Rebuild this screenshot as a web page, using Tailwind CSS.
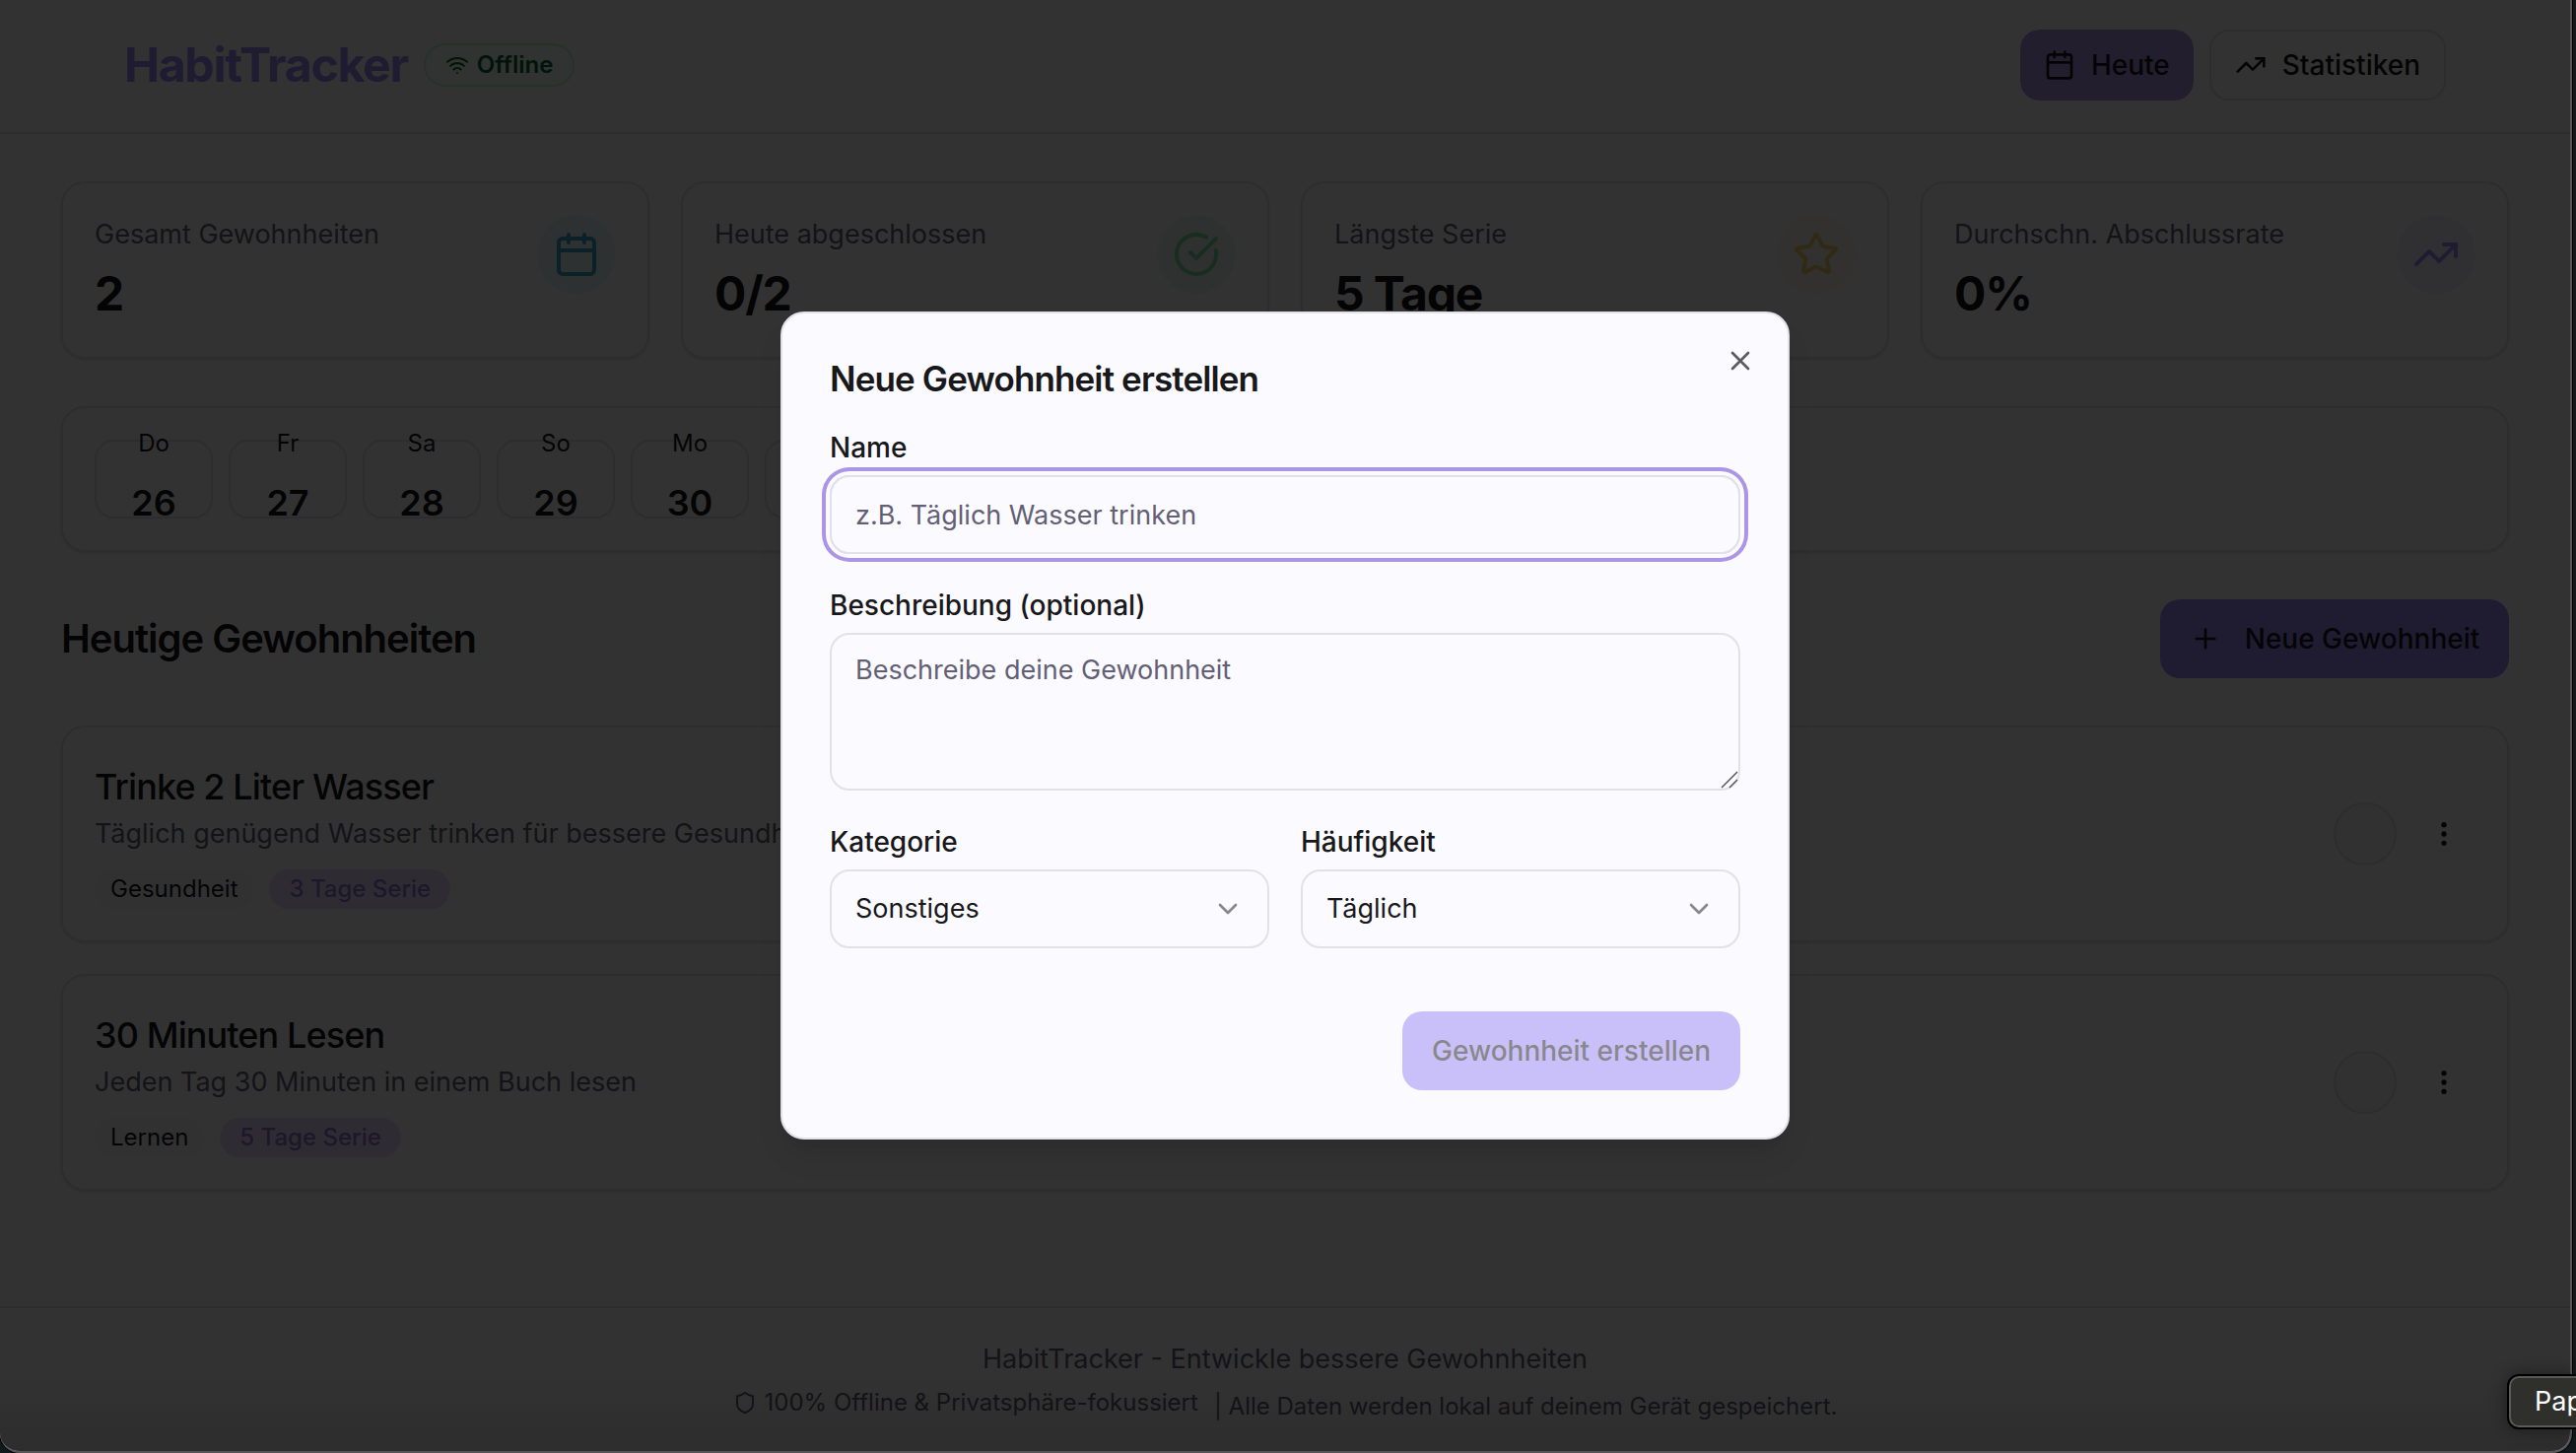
<!DOCTYPE html>
<html lang="de">
<head>
<meta charset="utf-8">
<meta name="viewport" content="width=device-width, initial-scale=1">
<title>HabitTracker</title>
<script src="https://cdn.jsdelivr.net/npm/@tailwindcss/browser@4"></script>
</head>
<body class="h-screen overflow-hidden bg-[#11191d] font-['Inter',sans-serif] text-[28px] leading-10 text-[#18181b]">
<svg class="hidden" aria-hidden="true">
  <symbol id="calendar" viewBox="0 0 24 24"><path d="M8 2v4M16 2v4M3 10h18"/><rect width="18" height="18" x="3" y="4" rx="2"/></symbol>
  <symbol id="trend" viewBox="0 0 24 24"><path d="m22 7-8.5 8.5-5-5L2 17"/><path d="M16 7h6v6"/></symbol>
  <symbol id="chevron" viewBox="0 0 24 24"><path d="m6 9 6 6 6-6"/></symbol>
  <symbol id="dots" viewBox="0 0 24 24"><circle cx="12" cy="12" r="1"/><circle cx="12" cy="5" r="1"/><circle cx="12" cy="19" r="1"/></symbol>
</svg>

<!-- Browser window -->
<div class="relative mr-1 flex h-screen flex-col overflow-hidden rounded-b-[20px] border-r-2 border-b-2 border-[#585656] bg-[#fbfaff] shadow-[0_0_0_1px_#000]">
  <header class="flex h-[136px] shrink-0 items-center justify-between border-b-2 border-[#dedde4] px-[126px] pb-0.5">
    <div class="flex items-center gap-4">
      <h1 class="text-5xl font-bold tracking-tight text-[#9b87f5]">HabitTracker</h1>
      <span class="flex h-11 items-center gap-2 rounded-full border-2 border-green-200 bg-green-50 px-5 text-2xl font-semibold text-green-800">
        <svg class="size-6 fill-none stroke-current stroke-2" viewBox="0 0 24 24" stroke-linecap="round" stroke-linejoin="round"><path d="M12 20h.01M2 8.82a15 15 0 0 1 20 0M5 12.859a10 10 0 0 1 14 0M8.5 16.429a5 5 0 0 1 7 0"/></svg>
        Offline
      </span>
    </div>
    <nav class="flex gap-4 font-medium">
      <button type="button" class="flex h-[72px] items-center gap-4 rounded-[20px] bg-[#ad95e6] px-6">
        <svg class="size-8 fill-none stroke-current stroke-2" stroke-linecap="round" stroke-linejoin="round"><use href="#calendar"/></svg>Heute
      </button>
      <button type="button" class="flex h-[72px] items-center gap-4 rounded-[20px] border-2 border-[#dedde4] px-6">
        <svg class="size-8 fill-none stroke-current stroke-2" stroke-linecap="round" stroke-linejoin="round"><use href="#trend"/></svg>Statistiken
      </button>
    </nav>
  </header>

  <main class="flex grow flex-col gap-12 px-[62px] pt-12">
    <section class="grid grid-cols-4 gap-8">
      <div class="flex items-start justify-between rounded-3xl border-2 border-[#dedde4] p-8 shadow-sm">
        <div class="flex flex-col gap-2"><p class="text-[27px] text-[#635f75]">Gesamt Gewohnheiten</p><p class="text-5xl leading-16 font-bold tracking-tight">2</p></div>
        <span class="grid size-20 place-items-center rounded-full bg-[#e6f6f8] text-[#3f9fc0]"><svg class="size-12 fill-none stroke-current stroke-2" stroke-linecap="round" stroke-linejoin="round"><use href="#calendar"/></svg></span>
      </div>
      <div class="flex items-start justify-between rounded-3xl border-2 border-[#dedde4] p-8 shadow-sm">
        <div class="flex flex-col gap-2"><p class="text-[27px] text-[#635f75]">Heute abgeschlossen</p><p class="text-5xl leading-16 font-bold tracking-tight">0/2</p></div>
        <span class="grid size-20 place-items-center rounded-full bg-[#e6f6f0] text-[#7be0a0]"><svg class="size-12 fill-none stroke-current stroke-2" viewBox="0 0 24 24" stroke-linecap="round" stroke-linejoin="round"><path d="M21.801 10A10 10 0 1 1 17 3.335"/><path d="m9 11 3 3L22 4"/></svg></span>
      </div>
      <div class="flex items-start justify-between rounded-3xl border-2 border-[#dedde4] p-8 shadow-sm">
        <div class="flex flex-col gap-2"><p class="text-[27px] text-[#635f75]">Längste Serie</p><p class="text-5xl leading-16 font-bold tracking-tight">5 Tage</p></div>
        <span class="grid size-20 place-items-center rounded-full bg-[#fbf4ec] text-[#f0ca60]"><svg class="size-12 fill-none stroke-current stroke-2" viewBox="0 0 24 24" stroke-linecap="round" stroke-linejoin="round"><path d="M11.525 2.295a.53.53 0 0 1 .95 0l2.31 4.679a2.123 2.123 0 0 0 1.595 1.16l5.166.756a.53.53 0 0 1 .294.904l-3.736 3.638a2.123 2.123 0 0 0-.611 1.878l.882 5.14a.53.53 0 0 1-.771.56l-4.618-2.428a2.122 2.122 0 0 0-1.973 0L6.396 21.01a.53.53 0 0 1-.77-.56l.881-5.139a2.122 2.122 0 0 0-.611-1.879L2.16 9.795a.53.53 0 0 1 .294-.906l5.165-.755a2.122 2.122 0 0 0 1.597-1.16z"/></svg></span>
      </div>
      <div class="flex items-start justify-between rounded-3xl border-2 border-[#dedde4] p-8 shadow-sm">
        <div class="flex flex-col gap-2"><p class="text-[27px] text-[#635f75]">Durchschn. Abschlussrate</p><p class="text-5xl leading-16 font-bold tracking-tight">0%</p></div>
        <span class="grid size-20 place-items-center rounded-full bg-[#f1effa] text-[#9b87f5]"><svg class="size-12 fill-none stroke-current stroke-2" stroke-linecap="round" stroke-linejoin="round"><use href="#trend"/></svg></span>
      </div>
    </section>

    <section class="flex gap-4 rounded-3xl border-2 border-[#dedde4] p-8 shadow-sm">
      <button type="button" class="flex h-20 w-[120px] flex-col items-center justify-center gap-4 rounded-[20px] border-2 border-[#dedde4]"><span class="text-2xl leading-8">Do</span><span class="text-4xl leading-14 font-semibold">26</span></button>
      <button type="button" class="flex h-20 w-[120px] flex-col items-center justify-center gap-4 rounded-[20px] border-2 border-[#dedde4]"><span class="text-2xl leading-8">Fr</span><span class="text-4xl leading-14 font-semibold">27</span></button>
      <button type="button" class="flex h-20 w-[120px] flex-col items-center justify-center gap-4 rounded-[20px] border-2 border-[#dedde4]"><span class="text-2xl leading-8">Sa</span><span class="text-4xl leading-14 font-semibold">28</span></button>
      <button type="button" class="flex h-20 w-[120px] flex-col items-center justify-center gap-4 rounded-[20px] border-2 border-[#dedde4]"><span class="text-2xl leading-8">So</span><span class="text-4xl leading-14 font-semibold">29</span></button>
      <button type="button" class="flex h-20 w-[120px] flex-col items-center justify-center gap-4 rounded-[20px] border-2 border-[#dedde4]"><span class="text-2xl leading-8">Mo</span><span class="text-4xl leading-14 font-semibold">30</span></button>
      <button type="button" aria-label="Dienstag" class="h-20 w-[120px] rounded-[20px] border-2 border-[#dedde4]"></button>
    </section>

    <section class="flex flex-col gap-12">
      <div class="flex items-center justify-between">
        <h2 class="text-[40px] font-semibold tracking-tight">Heutige Gewohnheiten</h2>
        <button type="button" class="flex h-20 w-[354px] items-center justify-center gap-6 rounded-[20px] bg-[#9b87f5] font-medium">
          <svg class="size-8 fill-none stroke-current stroke-2" viewBox="0 0 24 24" stroke-linecap="round"><path d="M5 12h14M12 5v14"/></svg>Neue Gewohnheit
        </button>
      </div>
      <div class="flex flex-col gap-8">
        <article class="flex items-center justify-between rounded-3xl border-2 border-[#dedde4] p-8 shadow-sm">
          <div>
            <h3 class="text-4xl leading-14 font-medium tracking-tight">Trinke 2 Liter Wasser</h3>
            <p class="text-[27px] text-[#635f75]">Täglich genügend Wasser trinken für bessere Gesundheit</p>
            <div class="mt-4 flex gap-4 text-2xl leading-10">
              <span class="rounded-full bg-[#f4f3f8] px-4">Gesundheit</span>
              <span class="rounded-full bg-[#e9d5ff] px-5 font-medium text-[#8a78cc]">3 Tage Serie</span>
            </div>
          </div>
          <div class="flex gap-4">
            <button type="button" aria-label="Erledigt" class="size-16 rounded-full border-2 border-[#dedde4] bg-[#f5f3f8]"></button>
            <button type="button" aria-label="Menü" class="grid size-16 place-items-center"><svg class="size-8 fill-none stroke-current stroke-2"><use href="#dots"/></svg></button>
          </div>
        </article>
        <article class="flex items-center justify-between rounded-3xl border-2 border-[#dedde4] p-8 shadow-sm">
          <div>
            <h3 class="text-4xl leading-14 font-medium tracking-tight">30 Minuten Lesen</h3>
            <p class="text-[27px] text-[#635f75]">Jeden Tag 30 Minuten in einem Buch lesen</p>
            <div class="mt-4 flex gap-4 text-2xl leading-10">
              <span class="rounded-full bg-[#f4f3f8] px-4">Lernen</span>
              <span class="rounded-full bg-[#e9d5ff] px-5 font-medium text-[#8a78cc]">5 Tage Serie</span>
            </div>
          </div>
          <div class="flex gap-4">
            <button type="button" aria-label="Erledigt" class="size-16 rounded-full border-2 border-[#dedde4] bg-[#f5f3f8]"></button>
            <button type="button" aria-label="Menü" class="grid size-16 place-items-center"><svg class="size-8 fill-none stroke-current stroke-2"><use href="#dots"/></svg></button>
          </div>
        </article>
      </div>
    </section>
  </main>

  <footer class="flex h-[147px] shrink-0 flex-col items-center gap-2 border-t-2 border-[#dedde4] pt-8 text-[#635f75]">
    <p class="text-[27px]">HabitTracker - Entwickle bessere Gewohnheiten</p>
    <p class="flex items-start gap-4 text-2xl leading-8">
      <span class="flex items-center gap-2"><svg class="size-6 fill-none stroke-current stroke-2" viewBox="0 0 24 24" stroke-linecap="round" stroke-linejoin="round"><path d="M20 13c0 5-3.500 7.500-7.660 8.950a1 1 0 0 1-.67-.010C7.500 20.500 4 18 4 13V6a1 1 0 0 1 1-1c2 0 4.500-1.200 6.240-2.720a1.170 1.170 0 0 1 1.520 0C14.510 3.810 17 5 19 5a1 1 0 0 1 1 1z"/></svg>100% Offline &amp; Privatsphäre-fokussiert</span>
      <span class="pt-1">| Alle Daten werden lokal auf deinem Gerät gespeichert.</span>
    </p>
  </footer>

  <!-- Dialog over the dimmed page -->
  <div class="absolute inset-0 flex items-center justify-center bg-black/80">
    <div class="absolute inset-x-0 bottom-0 h-20 bg-linear-to-b from-transparent to-black/10"></div>
    <form role="dialog" aria-labelledby="dialog-title" class="relative flex w-[1024px] flex-col gap-8 rounded-3xl border-2 border-[#e2e1e9] bg-[#fbfaff] p-12 shadow-[0_20px_30px_-6px_#0000001a,0_8px_12px_-8px_#0000001a]">
      <h2 id="dialog-title" class="text-[35px] leading-9 font-semibold tracking-tight">Neue Gewohnheit erstellen</h2>
      <div class="flex flex-col gap-2">
        <label for="name" class="font-medium">Name</label>
        <input id="name" type="text" placeholder="z.B. Täglich Wasser trinken" class="h-20 rounded-[20px] border-2 border-[#e2e1e9] px-6 text-[27px] ring-4 ring-[#ad95e6] ring-offset-4 ring-offset-[#fbfaff] outline-none placeholder:text-[#635f75]">
      </div>
      <div class="relative flex flex-col gap-2">
        <label for="desc" class="font-medium">Beschreibung (optional)</label>
        <textarea id="desc" placeholder="Beschreibe deine Gewohnheit" class="h-40 resize-none rounded-[20px] border-2 border-[#e2e1e9] px-6 py-4 text-[27px] outline-none placeholder:text-[#635f75]"></textarea>
        <svg class="pointer-events-none absolute right-0.5 bottom-0.5 size-[18px] fill-none stroke-[#55555a]" viewBox="0 0 18 18" stroke-width="1.500"><path d="M1 17 17 1M9 17l8-8"/></svg>
      </div>
      <div class="grid grid-cols-2 gap-8">
        <div class="relative flex flex-col gap-2">
          <label for="cat" class="font-medium">Kategorie</label>
          <select id="cat" class="h-20 appearance-none rounded-[20px] border-2 border-[#e2e1e9] px-6 text-[27px]"><option>Sonstiges</option></select>
          <svg class="pointer-events-none absolute right-6.5 bottom-6 size-8 fill-none stroke-current stroke-2 opacity-50" stroke-linecap="round" stroke-linejoin="round"><use href="#chevron"/></svg>
        </div>
        <div class="relative flex flex-col gap-2">
          <label for="freq" class="font-medium">Häufigkeit</label>
          <select id="freq" class="h-20 appearance-none rounded-[20px] border-2 border-[#e2e1e9] px-6 text-[27px]"><option>Täglich</option></select>
          <svg class="pointer-events-none absolute right-6.5 bottom-6 size-8 fill-none stroke-current stroke-2 opacity-50" stroke-linecap="round" stroke-linejoin="round"><use href="#chevron"/></svg>
        </div>
      </div>
      <button type="submit" disabled class="mt-8 h-20 w-[343px] self-end rounded-[20px] bg-[#9b87f5] font-medium opacity-50">Gewohnheit erstellen</button>
      <button type="button" aria-label="Schließen" class="absolute top-8 right-8 opacity-70"><svg class="size-8 fill-none stroke-current stroke-2" viewBox="0 0 24 24" stroke-linecap="round"><path d="M18 6 6 18M6 6l12 12"/></svg></button>
    </form>
  </div>
</div>

<!-- Desktop tooltip cut off by the screen edge -->
<div class="absolute right-0 bottom-6 h-14 w-[70px] overflow-hidden rounded-l-xl border-y-2 border-l-2 border-black bg-[#2f302c] shadow-[0_0_16px_#00000066]">
  <div class="h-full rounded-l-[10px] border-y-2 border-l-2 border-[#5a5a57] pl-6 text-[27px] leading-[48px] text-white">Pap</div>
</div>
</body>
</html>
